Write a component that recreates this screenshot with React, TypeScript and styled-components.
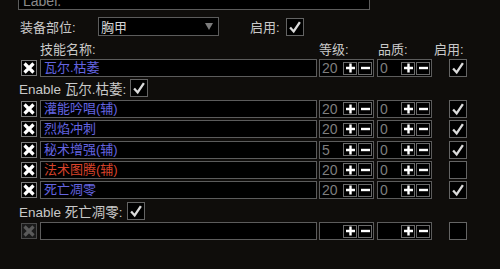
import React from 'react';
import styled, {createGlobalStyle} from 'styled-components';

type Skill = {
    name: string
    level: string
    quality: string
    enabled: boolean
    color?: 'blue' | 'red'
    enableLine?: boolean
}

const skills: Skill[] = [
    {name: '瓦尔.枯萎', level: '20', quality: '0', enabled: true, enableLine: true},
    {name: '灌能吟唱(辅)', level: '20', quality: '0', enabled: true},
    {name: '烈焰冲刺', level: '20', quality: '0', enabled: true},
    {name: '秘术增强(辅)', level: '5', quality: '0', enabled: true},
    {name: '法术图腾(辅)', level: '20', quality: '0', enabled: false, color: 'red'},
    {name: '死亡凋零', level: '20', quality: '0', enabled: true, enableLine: true},
]

const GlobalStyle = createGlobalStyle`
  body {
    margin: 0;
    background: #0f0d0b;
    font-family: "Liberation Sans", "Noto Sans CJK SC", sans-serif;
    color: #c9c9c9;
    overflow: hidden;
  }
`

const CheckIcon = () => (
    <svg width="18" height="18" viewBox="0 0 18 18">
        <path d="M3.5 9.5 L7.5 14 L14.5 3.5" fill="none" stroke="#dcdcdc" strokeWidth="2.6"/>
    </svg>
)

const CrossIcon = ({dim}: { dim?: boolean }) => (
    <svg width="14" height="14" viewBox="0 0 14 14">
        <path d="M2.5 2.5 L11.5 11.5 M11.5 2.5 L2.5 11.5" fill="none" stroke={dim ? '#5a5a5a' : '#ffffff'} strokeWidth="3.2"/>
    </svg>
)

const PlusIcon = () => (
    <svg width="11" height="10" viewBox="0 0 11 10">
        <path d="M1 5 H10 M5.5 0.5 V9.5" fill="none" stroke="#ffffff" strokeWidth="2.4"/>
    </svg>
)

const MinusIcon = () => (
    <svg width="11" height="10" viewBox="0 0 11 10">
        <path d="M1 5 H10" fill="none" stroke="#ffffff" strokeWidth="2.4"/>
    </svg>
)

const Stepper = ({value}: { value: string }) => (
    <NumberBox>
        <NumberValue>{value}</NumberValue>
        <StepButton><PlusIcon/></StepButton>
        <StepButton><MinusIcon/></StepButton>
    </NumberBox>
)

const SkillRow = ({skill, empty}: { skill?: Skill, empty?: boolean }) => (
    <Row>
        <RemoveButton $dim={empty}><CrossIcon dim={empty}/></RemoveButton>
        <NameBox $color={skill?.color}>{skill?.name}</NameBox>
        <Stepper value={skill ? skill.level : ''}/>
        <Stepper value={skill ? skill.quality : ''}/>
        <CheckBox $margin={17}>{skill?.enabled && <CheckIcon/>}</CheckBox>
    </Row>
)

export default function App() {
    return (
        <Page>
            <GlobalStyle/>
            <LabelField>Label.</LabelField>
            <SlotRow>
                <SlotLabel>装备部位:</SlotLabel>
                <Select>
                    <span>胸甲</span>
                    <Arrow/>
                </Select>
                <InlineLabel>启用:</InlineLabel>
                <CheckBox $margin={6}><CheckIcon/></CheckBox>
            </SlotRow>
            <Header>
                <HeaderLabel $width={279}>技能名称:</HeaderLabel>
                <HeaderLabel $width={59}>等级:</HeaderLabel>
                <HeaderLabel $width={56}>品质:</HeaderLabel>
                <HeaderLabel $width={40}>启用:</HeaderLabel>
            </Header>
            <List>
                {skills.map(skill => (
                    <React.Fragment key={skill.name}>
                        <SkillRow skill={skill}/>
                        {skill.enableLine && (
                            <EnableRow>
                                <span>Enable {skill.name}:</span>
                                <CheckBox $margin={4}><CheckIcon/></CheckBox>
                            </EnableRow>
                        )}
                    </React.Fragment>
                ))}
                <SkillRow empty/>
            </List>
        </Page>
    )
}

const Page = styled.div`
  display: flex;
  flex-direction: column;
  padding-left: 20px;
  margin-top: -7px;
  font-size: 13px;
`

const Box = styled.div`
  box-sizing: border-box;
  height: 18px;
  border: 1px solid #5c5c5c;
  background: #000;
`

const LabelField = styled(Box)`
  width: 352px;
  height: 17px;
  margin-left: -2px;
  padding-left: 4px;
  line-height: 14px;
  font-size: 14px;
  color: #8a8a8a;
`

const SlotRow = styled.div`
  display: flex;
  align-items: center;
  height: 19px;
  margin-top: 7px;
`

const SlotLabel = styled.span`
  width: 78px;
`

const Select = styled(Box)`
  width: 121px;
  height: 19px;
  display: flex;
  align-items: center;
  justify-content: space-between;
  padding: 0 5px 0 2px;
  color: #d4d4d4;
`

const Arrow = styled.span`
  width: 0;
  height: 0;
  border-left: 4px solid transparent;
  border-right: 4px solid transparent;
  border-top: 7px solid #7c7c7c;
`

const InlineLabel = styled.span`
  margin-left: 31px;
`

const CheckBox = styled(Box)<{ $margin: number }>`
  width: 18px;
  flex-shrink: 0;
  margin-left: ${p => p.$margin}px;
  display: flex;
  align-items: center;
  justify-content: center;
  border-color: #646464;
`

const Header = styled.div`
  display: flex;
  align-items: center;
  height: 18px;
  margin-top: 3px;
  padding-left: 20px;
`

const HeaderLabel = styled.span<{ $width: number }>`
  width: ${p => p.$width}px;
  flex-shrink: 0;
`

const List = styled.div`
  display: flex;
  flex-direction: column;
  gap: 2.4px;
  margin-top: 2px;
`

const Row = styled.div`
  display: flex;
  align-items: center;
  height: 18px;
`

const RemoveButton = styled.div<{ $dim?: boolean }>`
  box-sizing: border-box;
  width: 16px;
  height: 16px;
  margin: 0 3px 0 1px;
  border: 1px solid ${p => p.$dim ? '#4a4a4a' : '#7a7a7a'};
  background: ${p => p.$dim ? '#1a1a1a' : '#000'};
  display: flex;
  align-items: center;
  justify-content: center;
`

const NameBox = styled(Box)<{ $color?: 'blue' | 'red' }>`
  width: 277px;
  padding-left: 3px;
  line-height: 16px;
  color: ${p => p.$color === 'red' ? '#d9432b' : '#6464e0'};
`

const NumberBox = styled(Box)`
  width: 55px;
  margin-left: 2px;
  display: flex;
  align-items: center;
  padding-left: 2px;

  & + & {
    margin-left: 3px;
  }
`

const NumberValue = styled.span`
  width: 21px;
  font-size: 14px;
  line-height: 16px;
  color: #7e7e7e;
`

const StepButton = styled.div`
  box-sizing: border-box;
  width: 14px;
  height: 13px;
  margin-right: 1px;
  border: 1px solid #6a6a6a;
  background: #000;
  display: flex;
  align-items: center;
  justify-content: center;
`

const EnableRow = styled.div`
  display: flex;
  align-items: center;
  height: 18px;
  margin-left: -1px;
  font-size: 13.5px;
`
